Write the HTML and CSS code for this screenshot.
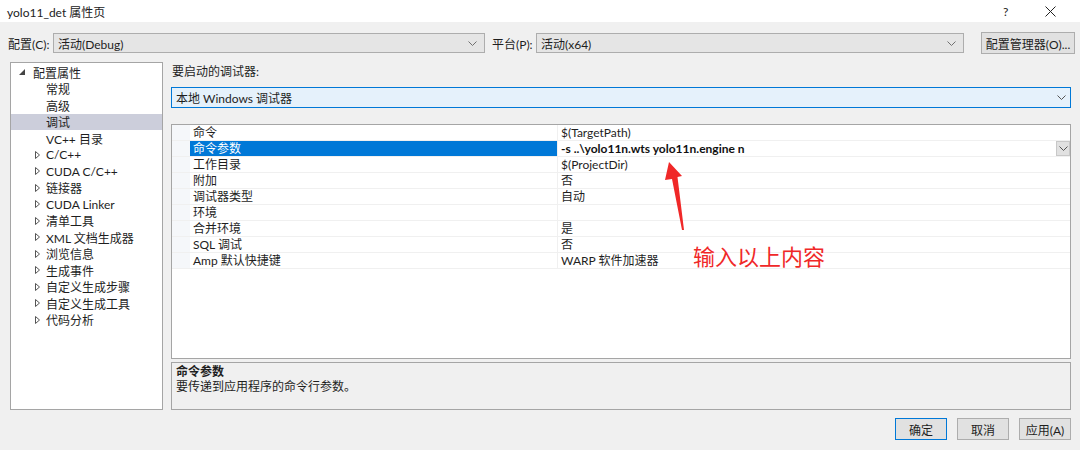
FILE: index.html
```html
<html lang="zh-CN">
<head>
    <meta charset="UTF-8">
    <title>yolo11_det 属性页</title>
    <link rel="stylesheet" href="styles.css">
</head>
<body>
<div class="window">
    <div class="titlebar">
        <span class="title">yolo11_det 属性页</span>
        <span class="help">?</span>
        <svg class="close" width="11" height="11" viewBox="0 0 11 11"><path d="M0.5 0.5 L10.5 10.5 M10.5 0.5 L0.5 10.5" stroke="#222" stroke-width="1" fill="none"/></svg>
    </div>

    <div class="toolbar">
        <span class="lbl">配置(C):</span>
        <div class="combo combo-config">
            <span>活动(Debug)</span>
            <svg class="chev" width="9" height="5" viewBox="0 0 9 5"><path d="M0.5 0.5 L4.5 4.5 L8.5 0.5" stroke="#707070" fill="none"/></svg>
        </div>
        <span class="lbl lbl-platform">平台(P):</span>
        <div class="combo combo-platform">
            <span>活动(x64)</span>
            <svg class="chev" width="9" height="5" viewBox="0 0 9 5"><path d="M0.5 0.5 L4.5 4.5 L8.5 0.5" stroke="#707070" fill="none"/></svg>
        </div>
        <div class="btn btn-manager">配置管理器(O)...</div>
    </div>

    <div class="main">
        <div class="tree">
            <div class="node root">
                <svg class="exp" width="6" height="6" viewBox="0 0 6 6"><path d="M6 0 L6 6 L0 6 Z" fill="#444"/></svg>
                <span>配置属性</span>
            </div>
            <div class="node leaf">常规</div>
            <div class="node leaf">高级</div>
            <div class="node leaf selected">调试</div>
            <div class="node leaf">VC++ 目录</div>
            <div class="node closed"><svg class="col" width="5" height="8" viewBox="0 0 5 8"><path d="M0.5 0.5 L4.5 4 L0.5 7.5 Z" stroke="#555" fill="none"/></svg><span>C/C++</span></div>
            <div class="node closed"><svg class="col" width="5" height="8" viewBox="0 0 5 8"><path d="M0.5 0.5 L4.5 4 L0.5 7.5 Z" stroke="#555" fill="none"/></svg><span>CUDA C/C++</span></div>
            <div class="node closed"><svg class="col" width="5" height="8" viewBox="0 0 5 8"><path d="M0.5 0.5 L4.5 4 L0.5 7.5 Z" stroke="#555" fill="none"/></svg><span>链接器</span></div>
            <div class="node closed"><svg class="col" width="5" height="8" viewBox="0 0 5 8"><path d="M0.5 0.5 L4.5 4 L0.5 7.5 Z" stroke="#555" fill="none"/></svg><span>CUDA Linker</span></div>
            <div class="node closed"><svg class="col" width="5" height="8" viewBox="0 0 5 8"><path d="M0.5 0.5 L4.5 4 L0.5 7.5 Z" stroke="#555" fill="none"/></svg><span>清单工具</span></div>
            <div class="node closed"><svg class="col" width="5" height="8" viewBox="0 0 5 8"><path d="M0.5 0.5 L4.5 4 L0.5 7.5 Z" stroke="#555" fill="none"/></svg><span>XML 文档生成器</span></div>
            <div class="node closed"><svg class="col" width="5" height="8" viewBox="0 0 5 8"><path d="M0.5 0.5 L4.5 4 L0.5 7.5 Z" stroke="#555" fill="none"/></svg><span>浏览信息</span></div>
            <div class="node closed"><svg class="col" width="5" height="8" viewBox="0 0 5 8"><path d="M0.5 0.5 L4.5 4 L0.5 7.5 Z" stroke="#555" fill="none"/></svg><span>生成事件</span></div>
            <div class="node closed"><svg class="col" width="5" height="8" viewBox="0 0 5 8"><path d="M0.5 0.5 L4.5 4 L0.5 7.5 Z" stroke="#555" fill="none"/></svg><span>自定义生成步骤</span></div>
            <div class="node closed"><svg class="col" width="5" height="8" viewBox="0 0 5 8"><path d="M0.5 0.5 L4.5 4 L0.5 7.5 Z" stroke="#555" fill="none"/></svg><span>自定义生成工具</span></div>
            <div class="node closed"><svg class="col" width="5" height="8" viewBox="0 0 5 8"><path d="M0.5 0.5 L4.5 4 L0.5 7.5 Z" stroke="#555" fill="none"/></svg><span>代码分析</span></div>
        </div>

        <div class="right">
            <div class="caption">要启动的调试器:</div>
            <div class="combo combo-debugger">
                <span>本地 Windows 调试器</span>
                <svg class="chev" width="9" height="5" viewBox="0 0 9 5"><path d="M0.5 0.5 L4.5 4.5 L8.5 0.5" stroke="#555" fill="none"/></svg>
            </div>

            <div class="grid">
                <div class="row"><div class="gutter"></div><div class="name">命令</div><div class="value">$(TargetPath)</div></div>
                <div class="row active"><div class="gutter"></div><div class="name">命令参数</div><div class="value">-s ..\yolo11n.wts yolo11n.engine n<span class="drop"><svg width="9" height="5" viewBox="0 0 9 5"><path d="M0.5 0.5 L4.5 4.5 L8.5 0.5" stroke="#555" fill="none"/></svg></span></div></div>
                <div class="row"><div class="gutter"></div><div class="name">工作目录</div><div class="value">$(ProjectDir)</div></div>
                <div class="row"><div class="gutter"></div><div class="name">附加</div><div class="value">否</div></div>
                <div class="row"><div class="gutter"></div><div class="name">调试器类型</div><div class="value">自动</div></div>
                <div class="row"><div class="gutter"></div><div class="name">环境</div><div class="value"></div></div>
                <div class="row"><div class="gutter"></div><div class="name">合并环境</div><div class="value">是</div></div>
                <div class="row"><div class="gutter"></div><div class="name">SQL 调试</div><div class="value">否</div></div>
                <div class="row"><div class="gutter"></div><div class="name">Amp 默认快捷键</div><div class="value">WARP 软件加速器</div></div>

                <svg class="arrow" width="30" height="75" viewBox="0 0 30 75">
                    <path d="M8 0 L21 14 L16.5 15 L23 68 L21 68 L11 17 L4 18 Z" fill="#f02828"/>
                </svg>
                <div class="note">输入以上内容</div>
            </div>

            <div class="desc">
                <div class="desc-title">命令参数</div>
                <div>要传递到应用程序的命令行参数。</div>
            </div>
        </div>
    </div>

    <div class="footer">
        <div class="btn btn-ok">确定</div>
        <div class="btn">取消</div>
        <div class="btn">应用(A)</div>
    </div>
</div>
</body>
</html>
```

FILE: styles.css
```css
body {
    margin: 0;
    background: #f0f0f0;
    font-family: Lato, "Noto Sans CJK SC", sans-serif;
    font-size: 12px;
    color: #1e1e1e;
}

.window {
    width: 1080px;
    height: 450px;
    overflow: hidden;
}

.titlebar {
    height: 22px;
    background: #ffffff;
    display: flex;
    align-items: center;
    padding-left: 7px;
}
.title {
    flex: 1;
    color: #222;
}
.help {
    width: 12px;
    margin-right: 30px;
    color: #222;
}
.close {
    margin-right: 24px;
}

.toolbar {
    height: 40px;
    display: flex;
    align-items: center;
    padding-left: 8px;
    box-sizing: border-box;
    padding-top: 2px;
}
.lbl {
    width: 45px;
}
.lbl-platform {
    margin-left: 7px;
    width: 44px;
}

.combo {
    height: 20px;
    box-sizing: border-box;
    background: #e5e5e5;
    border: 1px solid #adadad;
    display: flex;
    align-items: center;
    padding-left: 4px;
    padding-right: 7px;
}
.combo span {
    flex: 1;
}
.combo-config {
    width: 432px;
}
.combo-platform {
    width: 428px;
}

.btn {
    height: 22px;
    box-sizing: border-box;
    background: #e1e1e1;
    border: 1px solid #adadad;
    display: flex;
    align-items: center;
    justify-content: center;
}
.btn-manager {
    width: 94px;
    margin-left: 17px;
}

.main {
    display: flex;
    padding-left: 10px;
    gap: 8px;
    height: 348px;
}

.tree {
    width: 153px;
    box-sizing: border-box;
    background: #ffffff;
    border: 1px solid #a5a5a5;
    padding-top: 1px;
}
.node {
    height: 16.5px;
    display: flex;
    align-items: center;
    white-space: nowrap;
}
.root {
    padding-left: 8px;
}
.root .exp {
    margin-right: 8px;
}
.leaf {
    padding-left: 35px;
}
.closed {
    padding-left: 24px;
}
.closed .col {
    margin-right: 6px;
}
.selected {
    background: #cccedb;
}

.right {
    width: 900px;
    display: flex;
    flex-direction: column;
}
.caption {
    height: 20px;
    line-height: 20px;
    padding-left: 1px;
    margin-bottom: 5px;
}
.combo-debugger {
    width: 900px;
    height: 21px;
    background: #e5f1fb;
    border-color: #0078d7;
    margin-bottom: 16px;
    padding-right: 4px;
}

.grid {
    position: relative;
    height: 235px;
    box-sizing: border-box;
    background: #ffffff;
    border: 1px solid #a5a5a5;
}
.row {
    height: 16px;
    display: flex;
    box-sizing: border-box;
    border-bottom: 1px solid #f0f0f0;
    white-space: nowrap;
}
.gutter {
    width: 18px;
    background: #f5f7fa;
}
.name {
    width: 368px;
    padding-left: 3px;
    box-sizing: border-box;
    border-right: 1px solid #f0f0f0;
    line-height: 15px;
}
.value {
    flex: 1;
    padding-left: 3px;
    line-height: 15px;
    display: flex;
}
.active .name {
    background: #0078d7;
    color: #ffffff;
}
.active .value {
    font-weight: bold;
    color: #111;
}
.drop {
    margin-left: auto;
    width: 14px;
    height: 15px;
    box-sizing: border-box;
    background: #e1e1e1;
    border: 1px solid #c8c8c8;
    display: flex;
    align-items: center;
    justify-content: center;
}

.arrow {
    position: absolute;
    left: 489px;
    top: 37px;
}
.note {
    position: absolute;
    left: 521px;
    top: 115px;
    font-family: "Noto Sans CJK SC", sans-serif;
    font-size: 22px;
    color: #f02828;
    line-height: 30px;
}

.desc {
    margin-top: 3px;
    height: 48px;
    box-sizing: border-box;
    border: 1px solid #a5a5a5;
    padding: 1px 4px;
    line-height: 15px;
}
.desc-title {
    font-weight: bold;
}

.footer {
    display: flex;
    justify-content: flex-end;
    gap: 10px;
    padding-right: 9px;
    margin-top: 8px;
}
.footer .btn {
    width: 52px;
}
.btn-ok {
    border: 1px solid #0078d7;
}
```
